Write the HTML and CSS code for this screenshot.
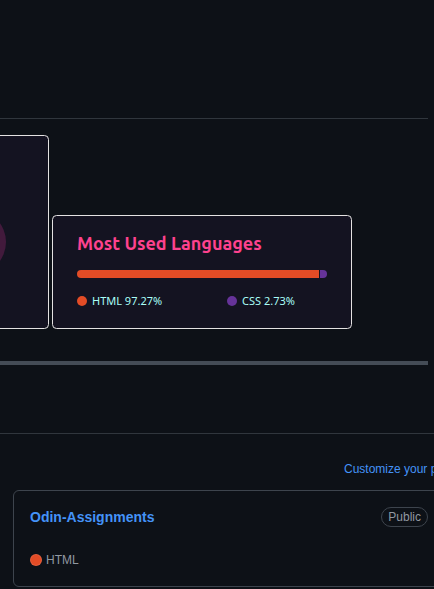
FILE: index.html
```html
<!DOCTYPE html>
<html>
<head>
<meta charset="utf-8">
<link rel="stylesheet" href="styles.css">
</head>
<body>
<div class="page">
  <div class="top-rule"></div>
  <div class="stats-scroller">
    <div class="cards-row">
      <div class="card stats-card">
        <div class="rank-circle"></div>
      </div>
      <div class="card lang-card">
        <div class="lang-title">Most Used Languages</div>
        <div class="lang-bar">
          <span class="seg seg-html" style="width:97.27%"></span>
          <span class="seg seg-css" style="width:2.73%"></span>
        </div>
        <div class="legend">
          <div class="legend-item"><span class="ldot dot-html"></span>HTML 97.27%</div>
          <div class="legend-item"><span class="ldot dot-css"></span>CSS 2.73%</div>
        </div>
      </div>
    </div>
  </div>
  <div class="scrollbar"></div>
  <div class="pinned">
    <div class="customize-row"><a class="customize">Customize your pins</a></div>
    <div class="repo-card">
      <div class="repo-head">
        <a class="repo-name">Odin-Assignments</a>
        <span class="badge">Public</span>
      </div>
      <div class="repo-meta"><span class="rdot"></span>HTML</div>
    </div>
  </div>
</div>
</body>
</html>
```

FILE: styles.css
```css
html, body {
  margin: 0;
  padding: 0;
  background: #0d1117;
  overflow: hidden;
}
.page {
  width: 434px;
  height: 589px;
  overflow: hidden;
  font-family: "Liberation Sans", Arial, sans-serif;
}
.top-rule {
  height: 119px;
  width: 428px;
  border-bottom: 1px solid #30363d;
  box-sizing: border-box;
}
.stats-scroller {
  width: 428px;
  overflow: hidden;
  padding-top: 16px;
  padding-bottom: 32px;
}
.cards-row {
  display: flex;
  align-items: flex-end;
  gap: 3px;
  margin-left: -451px;
}
.card {
  background: #141321;
  border: 1px solid #e4e2e2;
  border-radius: 4.5px;
  box-sizing: border-box;
  flex: none;
}
.stats-card {
  width: 500px;
  height: 194px;
  position: relative;
  overflow: hidden;
}
.rank-circle {
  position: absolute;
  left: 392px;
  top: 74px;
  width: 64px;
  height: 64px;
  border-radius: 50%;
  background: #421a3c;
}
.lang-card {
  width: 300px;
  height: 114px;
  padding: 16px 24px 0 24px;
}
.lang-title {
  font-family: "Ubuntu", "Noto Sans", sans-serif;
  font-weight: 700;
  font-size: 18px;
  line-height: 22px;
  color: #fe428e;
}
.lang-bar {
  display: flex;
  height: 8px;
  width: 250px;
  margin-top: 16px;
  border-radius: 5px;
  overflow: hidden;
}
.seg { display: block; height: 100%; }
.seg-html { background: #e34c26; }
.seg-css { background: #663399; margin-left: 1px; }
.legend {
  display: flex;
  margin-top: 16px;
}
.legend-item {
  flex: none;
  width: 150px;
  display: flex;
  align-items: center;
  gap: 5px;
  font-family: "Noto Sans", sans-serif;
  font-size: 11px;
  line-height: 14px;
  color: #a9fef7;
}
.ldot {
  width: 10px;
  height: 10px;
  border-radius: 50%;
  flex: none;
}
.dot-html { background: #e34c26; }
.dot-css { background: #663399; }
.scrollbar {
  width: 428px;
  height: 4px;
  background: #444c56;
}
.pinned {
  margin-top: 68px;
  border-top: 1px solid #30363d;
}
.customize-row {
  padding: 25px 0 0 344px;
  white-space: nowrap;
  height: 56px;
  box-sizing: border-box;
}
.customize {
  font-size: 12px;
  line-height: 16px;
  color: #4493f8;
}
.repo-card {
  margin-left: 13px;
  width: 440px;
  height: 97px;
  border: 1px solid #3d444d;
  border-radius: 6px;
  box-sizing: border-box;
  padding: 16px 16px 0 16px;
}
.repo-head {
  display: flex;
  align-items: center;
  width: 398px;
  justify-content: space-between;
}
.repo-name {
  font-weight: 700;
  font-size: 14px;
  line-height: 20px;
  color: #4493f8;
}
.badge {
  font-size: 12px;
  line-height: 18px;
  padding: 0 6px;
  border: 1px solid #3d444d;
  border-radius: 10px;
  color: #9198a1;
}
.repo-meta {
  margin-top: 24px;
  display: flex;
  align-items: center;
  gap: 4px;
  font-size: 12px;
  line-height: 18px;
  color: #9198a1;
}
.rdot {
  width: 12px;
  height: 12px;
  border-radius: 50%;
  background: #e34c26;
  border: 1px solid rgba(255,255,255,0.1);
  box-sizing: border-box;
}
```
